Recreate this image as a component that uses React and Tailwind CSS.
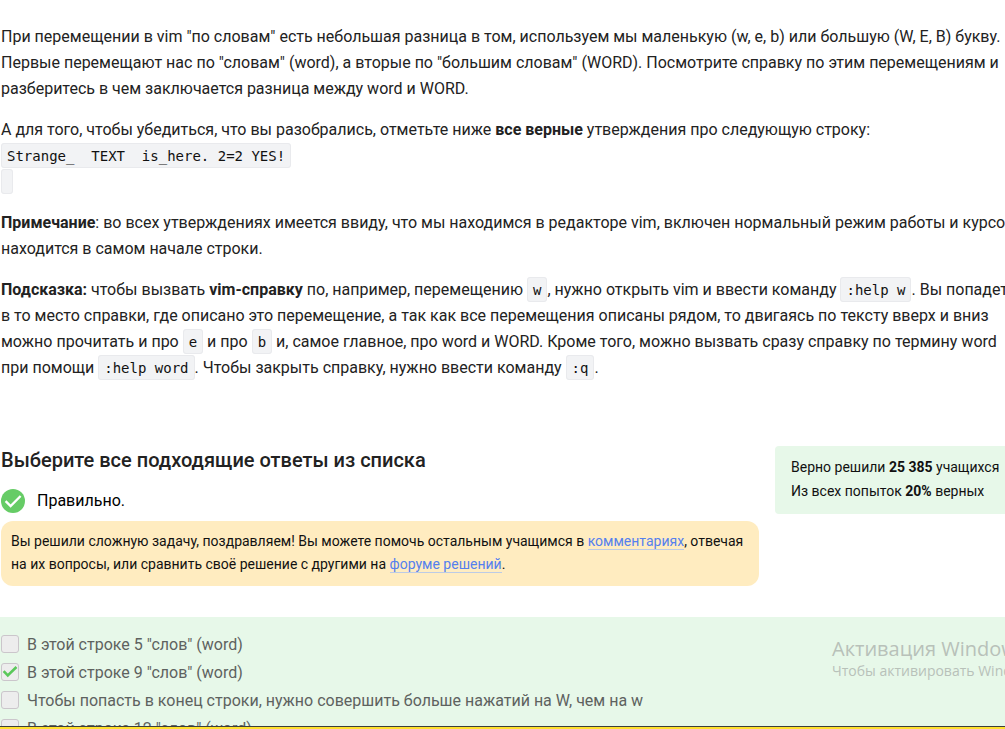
import React from "react";

function Code({ children }) {
  return (
    <code className="rounded-[3px] border border-[#e9eaed] bg-[#f2f3f5] px-[5px] pt-1 pb-[3px] font-['DejaVu_Sans_Mono',monospace] text-sm whitespace-pre text-[#111]">
      {children}
    </code>
  );
}

function Link({ children }) {
  return (
    <a href="#" className="border-b border-[#bccbe6] text-[#5580ee]">
      {children}
    </a>
  );
}

function Option({ id, checked, children }) {
  return (
    <div className="flex h-7 items-start gap-2">
      <span className="relative mt-1 flex size-[18px] shrink-0">
        <input
          id={id}
          type="checkbox"
          defaultChecked={checked}
          className="peer size-full appearance-none rounded-[3px] border border-[#cbc6cb] bg-[#ededed]"
        />
        <svg
          viewBox="0 0 17 17"
          className="pointer-events-none absolute inset-0 hidden peer-checked:block"
          fill="none"
          stroke="#5ac85a"
          strokeWidth="2.4"
        >
          <path d="M2.5 7.7 6.4 11.7 14.6 3.8" />
        </svg>
      </span>
      <label htmlFor={id} className="leading-7 whitespace-nowrap text-[#5e625f]">
        {children}
      </label>
    </div>
  );
}

const options = [
  ['В этой строке 5 "слов" (word)', false],
  ['В этой строке 9 "слов" (word)', true],
  ["Чтобы попасть в конец строки, нужно совершить больше нажатий на W, чем на w", false],
  ['В этой строке 12 "слов" (word)', false],
];

export default function App() {
  return (
    <div className="relative h-screen overflow-hidden bg-white font-['Roboto',sans-serif] text-base text-[#222]">
      <main className="-mr-5 pt-6">
        <article className="flex flex-col gap-[15px] pl-px leading-[26px]">
          <p>
            При перемещении в vim "по словам" есть небольшая разница в том, используем мы
            маленькую (w, e, b) или большую (W, E, B) букву. Первые перемещают нас по "словам"
            (word), а вторые по "большим словам" (WORD). Посмотрите справку по этим перемещениям
            и разберитесь в чем заключается разница между word и WORD.
          </p>
          <p>
            А для того, чтобы убедиться, что вы разобрались, отметьте ниже{" "}
            <b>все верные</b> утверждения про следующую строку:
            <br />
            <Code>{"Strange_  TEXT  is_here. 2=2 YES!"}</Code>
            <br />
            <Code />
          </p>
          <p>
            <b>Примечание</b>: во всех утверждениях имеется ввиду, что мы находимся в редакторе
            vim, включен нормальный режим работы и курсор находится в самом начале строки.
          </p>
          <p>
            <b>Подсказка:</b> чтобы вызвать <b>vim-справку</b> по, например, перемещению{" "}
            <Code>w</Code>, нужно открыть vim и ввести команду <Code>:help w</Code>. Вы попадете в
            то место справки, где описано это перемещение, а так как все перемещения описаны
            рядом, то двигаясь по тексту вверх и вниз можно прочитать и про <Code>e</Code> и про{" "}
            <Code>b</Code> и, самое главное, про word и WORD. Кроме того, можно вызвать сразу
            справку по термину word при помощи <Code>:help word</Code>. Чтобы закрыть справку,
            нужно ввести команду <Code>:q</Code>.
          </p>
        </article>

        <section className="mt-[65px] flex items-start gap-4 pl-px">
          <div className="min-w-0 flex-1">
            <h2 className="text-xl leading-7 font-medium">Выберите все подходящие ответы из списка</h2>
            <div className="mt-[15px] flex items-center gap-3 text-black">
              <svg viewBox="0 0 24 24" className="size-6" fill="none">
                <circle cx="12" cy="12" r="12" fill="#66cc66" />
                <path d="M4.6 12.2 9.6 17 19.6 7" stroke="#fff" strokeWidth="2.4" />
              </svg>
              <span>Правильно.</span>
            </div>
            <p className="mt-2 rounded-xl bg-[#ffecc0] px-[10px] pt-[9px] pb-[10px] text-sm leading-[23px] text-[#111]">
              Вы решили сложную задачу, поздравляем! Вы можете помочь остальным учащимся в{" "}
              <Link>комментариях</Link>, отвечая на их вопросы, или сравнить своё решение с
              другими на <Link>форуме решений</Link>.
            </p>
          </div>
          <aside className="w-[250px] rounded bg-[#e7f8e9] px-4 pt-[9px] pb-[11px] text-sm leading-6 whitespace-nowrap text-[#111]">
            <p>
              Верно решили <b>25 385</b> учащихся
            </p>
            <p>
              Из всех попыток <b>20%</b> верных
            </p>
          </aside>
        </section>

        <section className="mt-[31px] bg-[#e7f8e9] pt-[14px] pb-6 pl-px">
          {options.map(([text, checked], i) => (
            <Option key={i} id={`option-${i}`} checked={checked}>
              {text}
            </Option>
          ))}
        </section>
      </main>

      <div className="pointer-events-none absolute bottom-12 left-[832px] font-['Open_Sans',sans-serif] whitespace-nowrap text-[#b8c1b9]">
        <p className="text-xl leading-[25px]">Активация Windows</p>
        <p className="text-sm leading-5">Чтобы активировать Windows</p>
      </div>
      <div className="absolute inset-x-0 bottom-0 h-[3px] border-t border-[#3c3f3c] bg-[#ffe02e]" />
    </div>
  );
}
